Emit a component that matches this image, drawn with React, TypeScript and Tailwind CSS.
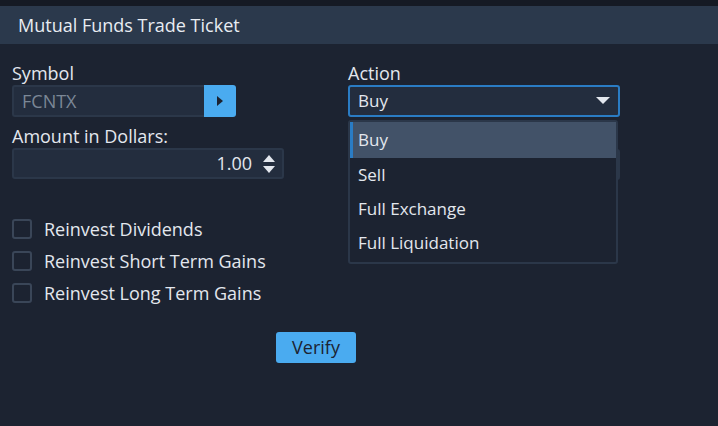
import { useState } from 'react'

const font = { fontFamily: '"Open Sans", "Noto Sans", sans-serif' }

function Checkbox({ label }: { label: string }) {
  return (
    <label className="flex items-center h-8 gap-[12px]">
      <span className="w-[20px] h-[20px] rounded-[3px] border-2 border-[#3a4658] bg-[#1c2331]" />
      <span className="text-[18px] text-[#e3e7ee]">{label}</span>
    </label>
  )
}

export default function App() {
  const [action] = useState('Buy')
  const options = ['Buy', 'Sell', 'Full Exchange', 'Full Liquidation']

  return (
    <div className="w-[718px] h-[426px] bg-[#1c2331] text-[#e3e7ee] overflow-hidden" style={font}>
      <div className="h-[6px] bg-[#151a24]" />
      {/* Title */}
      <div className="h-[38px] bg-[#2b394c] flex items-center px-[18px] text-[18px] text-[#e8ecf2]">
        Mutual Funds Trade Ticket
      </div>

      <div className="flex px-3 pt-[18px] gap-16">
        {/* Left column */}
        <div className="w-[272px] flex flex-col">
          <div className="text-[18px] leading-[22px] h-[22px]">Symbol</div>
          <div className="flex mt-[1px] w-[224px] h-[32px]">
            <div className="flex-1 bg-[#232d3e] border-2 border-[#2b3749] border-r-0 rounded-l-[3px] flex items-center px-2 text-[18px] text-[#7b8796]">
              FCNTX
            </div>
            <button className="w-[32px] bg-[#4aabf0] rounded-r-[3px] flex items-center justify-center">
              <svg width="8" height="12" viewBox="0 0 8 12">
                <path d="M1 1 L7 6 L1 11 Z" fill="#1c2331" />
              </svg>
            </button>
          </div>
          <div className="text-[18px] leading-[22px] mt-[8px]">Amount in Dollars:</div>
          <div className="mt-[1px] h-[31px] bg-[#232d3e] border-2 border-[#2b3749] rounded-[3px] flex items-center justify-end pr-[6px]">
            <span className="text-[18px] text-[#e3e7ee]">1.00</span>
            <svg width="14" height="22" viewBox="0 0 14 22" className="ml-[10px]">
              <path d="M1 9 L7 2 L13 9 Z" fill="#e3e7ee" />
              <path d="M1 13 L7 20 L13 13 Z" fill="#e3e7ee" />
            </svg>
          </div>
          <div className="flex flex-col mt-[34px]">
            <Checkbox label="Reinvest Dividends" />
            <Checkbox label="Reinvest Short Term Gains" />
            <Checkbox label="Reinvest Long Term Gains" />
          </div>
        </div>

        {/* Right column */}
        <div className="w-[272px] flex flex-col relative">
          <div className="text-[18px] leading-[22px] h-[22px]">Action</div>
          <div className="mt-[1px] h-[32px] border-2 border-[#2a7cc4] rounded-[3px] bg-[#232d3e] flex items-center justify-between pl-[8px] pr-[8px] text-[17px]">
            <span>{action}</span>
            <svg width="14" height="8" viewBox="0 0 14 8">
              <path d="M0 0 L14 0 L7 7 Z" fill="#e3e7ee" />
            </svg>
          </div>
          <div className="mt-[32px] h-[31px] bg-[#232d3e] border-2 border-[#2b3749] rounded-[3px]" />

          {/* Open dropdown */}
          <div className="absolute left-0 top-[58px] w-[270px] bg-[#1c2331] border-2 border-[#2b3749] rounded-[3px] pb-[2px]">
            {options.map((o, i) => (
              <div
                key={o}
                className={
                  i === 0
                    ? 'h-[36px] flex items-center pl-[5px] text-[17px] bg-[#425268] border-l-[3px] border-[#2a7cc4]'
                    : 'h-[34px] flex items-center pl-[5px] text-[17px] border-l-[3px] border-transparent'
                }
              >
                {o}
              </div>
            ))}
          </div>
        </div>
      </div>

      <div className="flex mt-[23px] pl-[276px]">
        <button className="w-[80px] h-[31px] bg-[#4aabf0] rounded-[3px] text-[18px] text-[#1c2331] flex items-center justify-center">
          Verify
        </button>
      </div>
    </div>
  )
}
